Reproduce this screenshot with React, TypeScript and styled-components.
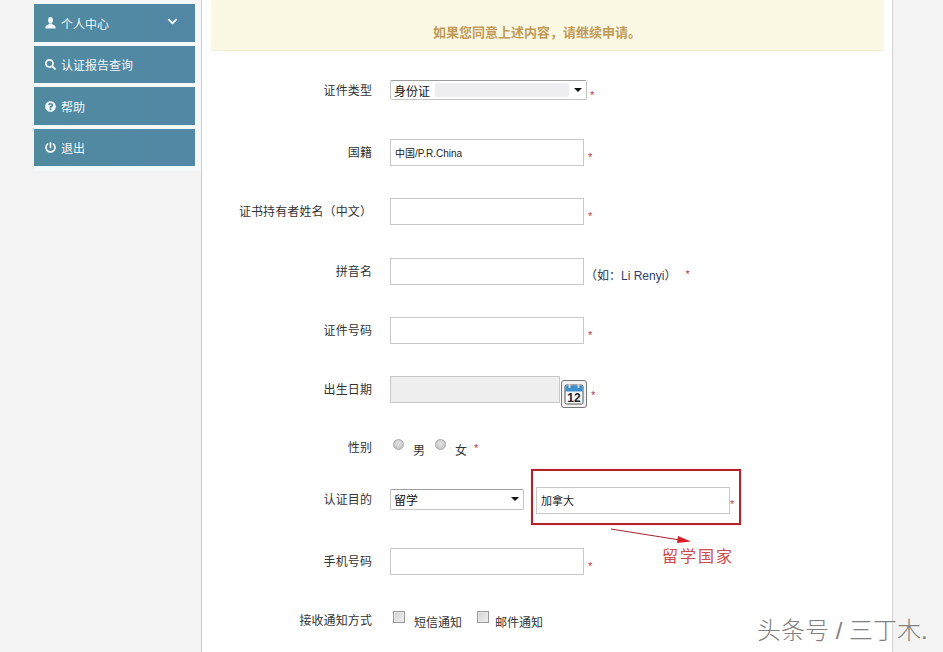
import React from "react";
import styled, { createGlobalStyle } from "styled-components";
import { FaChevronDown, FaSearch, FaQuestionCircle, FaPowerOff } from "react-icons/fa";

const cjk = `"Liberation Sans", "Noto Sans CJK SC", sans-serif`;

const Global = createGlobalStyle`
  html, body { margin: 0; padding: 0; background: #f3f3f3; overflow: hidden; }
  body { font-family: ${cjk}; font-size: 12px; color: #333; }
`;

const Page = styled.div`
  position: relative;
  width: 943px;
  height: 652px;
  overflow: hidden;
  display: flex;
  align-items: stretch;
  background: #f3f3f3;
`;

const Side = styled.nav`
  width: 201px;
  flex: none;
  box-sizing: border-box;
  padding-left: 34px;
`;

const SideMenu = styled.div`
  width: 167px;
  height: 171px;
  box-sizing: border-box;
  padding: 4px 6px 0 0;
  background: #f7f8f9;
  display: flex;
  flex-direction: column;
  gap: 4px;
`;

const SideButton = styled.a<{ $h: number }>`
  display: flex;
  align-items: center;
  gap: 5px;
  height: ${(p) => p.$h}px;
  padding: 0 17px 0 11px;
  color: #f2f7f9;
  background: linear-gradient(90deg, #508a9f, #5287a6);
  font-size: 12px;
  svg { flex: none; font-size: 11px; }
`;

const Caret = styled.span`
  margin-left: auto;
  display: flex;
  margin-top: -4px;
`;

const Main = styled.main`
  width: 692px;
  flex: none;
  box-sizing: border-box;
  background: #fff;
  border-left: 1px solid #ccc;
  border-right: 1px solid #d2d2d2;
  padding-left: 9px;
`;

const Banner = styled.div`
  width: 673px;
  height: 51px;
  box-sizing: border-box;
  padding: 26px 21px 0 0;
  background: #fbf8e4;
  border-bottom: 1px solid #f1eed8;
  color: #c19a56;
  font-weight: 700;
  font-size: 13px;
  line-height: 14px;
  text-align: center;
`;

const Form = styled.form`
  padding-top: 9px;
  margin-left: -9px;
`;

const Row = styled.div<{ $h: number }>`
  display: flex;
  align-items: center;
  height: ${(p) => p.$h}px;
`;

const Label = styled.label`
  width: 170px;
  flex: none;
  margin-right: 18px;
  text-align: right;
  font-size: 12px;
  letter-spacing: 0.1px;
  color: #333;
  margin-top: -2px;
`;

const FakeSelect = styled.div<{ $w: number; $h: number }>`
  width: ${(p) => p.$w}px;
  height: ${(p) => p.$h}px;
  box-sizing: border-box;
  display: flex;
  align-items: center;
  gap: 5px;
  padding: 0 4px 0 3px;
  border: 1px solid #c4c4c4;
  border-top-color: #9e9e9e;
  border-radius: 2px;
  background: #fff;
  color: #111;
  font-size: 12px;
  flex: none;
`;

const Smear = styled.span`
  flex: 1;
  height: 14px;
  background: #eeedef;
  border-radius: 2px;
`;

const Arrow = styled.span`
  margin-left: auto;
  width: 0;
  height: 0;
  border-left: 4px solid transparent;
  border-right: 4px solid transparent;
  border-top: 4px solid #111;
`;

const TextInput = styled.input<{ $w?: number; $disabled?: boolean; $size?: number; $left?: number; $top?: number }>`
  width: ${(p) => p.$w ?? 194}px;
  height: 27px;
  box-sizing: border-box;
  flex: none;
  margin: ${(p) => p.$top ?? 0}px 0 0 ${(p) => p.$left ?? 0}px;
  padding: 0 4px;
  border: 1px solid #c8c8c8;
  border-radius: 0;
  outline: none;
  background: ${(p) => (p.$disabled ? "#eeeeee" : "#fff")};
  font-family: ${cjk};
  font-size: ${(p) => p.$size ?? 10}px;
  color: #222;
`;

const Star = styled.span<{ $gap?: number; $drop?: number }>`
  color: #b8354a;
  font-size: 11px;
  line-height: 12px;
  margin-left: ${(p) => p.$gap ?? 4}px;
  margin-top: ${(p) => p.$drop ?? 10}px;
`;

const Hint = styled.span`
  margin: 6px 0 0 1px;
  font-size: 12px;
  color: #333;
  em { font-style: normal; color: #2d3f6b; }
`;

const CalendarButton = styled.button`
  width: 26px;
  height: 28px;
  flex: none;
  padding: 0;
  margin: 9px 0 0 1px;
  background: #f2f2f2;
  border: 1px solid #777;
  border-radius: 3px;
  display: flex;
  align-items: center;
  justify-content: center;
`;

const Radio = styled.span<{ $gap?: number }>`
  width: 11px;
  height: 11px;
  flex: none;
  margin-left: ${(p) => p.$gap ?? 0}px;
  margin-top: -6px;
  border-radius: 50%;
  border: 1px solid #a8a8a8;
  box-sizing: border-box;
  background: radial-gradient(circle at 50% 40%, #e4e4e4, #bdbdbd);
`;

const Check = styled.span<{ $gap?: number }>`
  width: 12px;
  height: 12px;
  flex: none;
  margin-left: ${(p) => p.$gap ?? 0}px;
  margin-top: -6px;
  box-sizing: border-box;
  border: 1px solid #999;
  background: linear-gradient(135deg, #cfcfcf, #f2f2f2);
  box-shadow: inset 0 0 0 1px #e8e8e8;
`;

const Choices = styled.div`
  display: flex;
  align-items: center;
  margin-left: 3px;
`;

const ChoiceText = styled.span<{ $gap: number }>`
  margin-left: ${(p) => p.$gap}px;
  font-size: 12px;
  color: #333;
  margin-top: 3px;
`;

const RedBox = styled.div`
  position: absolute;
  left: 531px;
  top: 469px;
  width: 210px;
  height: 56px;
  box-sizing: border-box;
  border: 2px solid #b3222a;
  box-shadow: 0 0 1px #f0a0a0;
  pointer-events: none;
`;

const Pointer = styled.svg`
  position: absolute;
  left: 608px;
  top: 526px;
`;

const Note = styled.div`
  position: absolute;
  left: 662px;
  top: 546px;
  font-size: 16px;
  line-height: 22px;
  letter-spacing: 2px;
  color: #cf4a4a;
`;

const Watermark = styled.div`
  position: absolute;
  left: 757px;
  top: 615px;
  font-size: 24px;
  line-height: 32px;
  font-weight: 300;
  white-space: nowrap;
  color: #808080;
  text-shadow: 0 1px 0 rgba(255, 255, 255, 0.6);
`;

function UserIcon() {
  return (
    <svg width="11" height="12" viewBox="0 0 12 12" fill="currentColor" preserveAspectRatio="none">
      <ellipse cx="6" cy="3.2" rx="2.6" ry="3.1" />
      <path d="M4.6 6.4 C4.4 7.6 1 8 .6 9.4 L.4 11.4 H11.6 L11.4 9.4 C11 8 7.6 7.6 7.4 6.4 Z" />
    </svg>
  );
}

function CalendarIcon() {
  return (
    <svg width="20" height="22" viewBox="0 0 20 22">
      <rect x="1" y="2" width="18" height="19" rx="1.5" fill="#fafafa" stroke="#555" />
      <rect x="1.5" y="2.5" width="17" height="6" fill="#3d8fc9" />
      <rect x="4.5" y="1" width="2" height="4" fill="#cfd8dd" />
      <rect x="13.5" y="1" width="2" height="4" fill="#cfd8dd" />
      <text x="10" y="19" fontSize="12" fontWeight="700" textAnchor="middle" fill="#1c2530" fontFamily="Liberation Sans">12</text>
    </svg>
  );
}

export default function App() {
  return (
    <Page>
      <Global />
      <Side>
        <SideMenu>
          <SideButton $h={38}>
            <UserIcon />
            个人中心
            <Caret><FaChevronDown /></Caret>
          </SideButton>
          <SideButton $h={37}><FaSearch />认证报告查询</SideButton>
          <SideButton $h={38}><FaQuestionCircle />帮助</SideButton>
          <SideButton $h={37}><FaPowerOff />退出</SideButton>
        </SideMenu>
      </Side>
      <Main>
        <Banner>如果您同意上述内容，请继续申请。</Banner>
        <Form>
          <Row $h={60}>
            <Label>证件类型</Label>
            <FakeSelect $w={197} $h={20}>身份证<Smear /><Arrow /></FakeSelect>
            <Star $gap={3}>*</Star>
          </Row>
          <Row $h={64}>
            <Label>国籍</Label>
            <TextInput readOnly value="中国/P.R.China" />
            <Star>*</Star>
          </Row>
          <Row $h={54}>
            <Label>证书持有者姓名（中文）</Label>
            <TextInput readOnly />
            <Star>*</Star>
          </Row>
          <Row $h={66}>
            <Label>拼音名</Label>
            <TextInput readOnly />
            <Hint>（如：<em>Li Renyi</em>）</Hint>
            <Star $gap={9} $drop={6}>*</Star>
          </Row>
          <Row $h={52}>
            <Label>证件号码</Label>
            <TextInput readOnly />
            <Star>*</Star>
          </Row>
          <Row $h={67}>
            <Label>出生日期</Label>
            <TextInput readOnly $w={170} $disabled />
            <CalendarButton type="button"><CalendarIcon /></CalendarButton>
            <Star>*</Star>
          </Row>
          <Row $h={49}>
            <Label>性别</Label>
            <Choices>
              <Radio />
              <ChoiceText $gap={9}>男</ChoiceText>
              <Radio $gap={10} />
              <ChoiceText $gap={9}>女</ChoiceText>
              <Star $gap={7} $drop={0}>*</Star>
            </Choices>
          </Row>
          <Row $h={54}>
            <Label>认证目的</Label>
            <FakeSelect $w={134} $h={21}>留学<Arrow /></FakeSelect>
            <TextInput readOnly value="加拿大" $size={11} $left={12} $top={2} />
            <Star $gap={0}>*</Star>
          </Row>
          <Row $h={70}>
            <Label>手机号码</Label>
            <TextInput readOnly />
            <Star>*</Star>
          </Row>
          <Row $h={48}>
            <Label>接收通知方式</Label>
            <Choices>
              <Check />
              <ChoiceText $gap={9}>短信通知</ChoiceText>
              <Check $gap={15} />
              <ChoiceText $gap={6}>邮件通知</ChoiceText>
            </Choices>
          </Row>
        </Form>
      </Main>
      <RedBox />
      <Pointer width="90" height="22" viewBox="0 0 90 22">
        <path d="M3 3 L72 14" stroke="#a8202a" strokeWidth="1" fill="none" />
        <path d="M70 10 L83 15.5 L69 17 Z" fill="#d81e26" />
      </Pointer>
      <Note>留学国家</Note>
      <Watermark>头条号 / 三丁木.</Watermark>
    </Page>
  );
}
